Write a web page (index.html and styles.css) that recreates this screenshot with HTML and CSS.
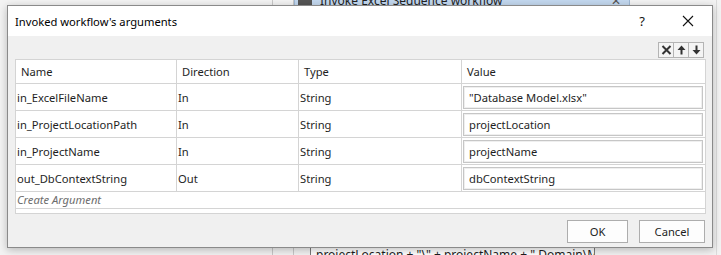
FILE: index.html
```html
<!DOCTYPE html>
<html lang="en">
<head>
    <meta charset="UTF-8">
    <title>Invoked workflow's arguments</title>
    <link rel="stylesheet" href="styles.css">
</head>
<body>
    <!-- designer canvas behind the modal -->
    <div class="backdrop">
        <div class="bg-line bg-line-a"></div>
        <div class="bg-line bg-line-b"></div>
        <div class="bg-activity">
            <span class="bg-icon"></span>
            <span class="bg-title">Invoke Excel Sequence workflow</span>
            <span class="bg-close">&#x2715;</span>
        </div>
        <div class="bg-expr">projectLocation + "\" + projectName + ".Domain\M</div>
        <div class="bg-edge"></div>
    </div>

    <div class="dialog">
        <div class="titlebar">
            <span class="title">Invoked workflow's arguments</span>
            <span class="help">?</span>
            <span class="close">
                <svg width="12" height="12" viewBox="0 0 12 12"><path d="M1 1 L11 11 M11 1 L1 11" stroke="#111" stroke-width="1.1" fill="none"/></svg>
            </span>
        </div>

        <div class="content">
            <div class="toolbar">
                <button class="tool">
                    <svg width="11" height="10" viewBox="0 0 11 10"><path d="M1.5 1 L9.5 9 M9.5 1 L1.5 9" stroke="#333" stroke-width="2" fill="none"/></svg>
                </button>
                <button class="tool">
                    <svg width="9" height="10" viewBox="0 0 9 10"><path d="M4.5 0.5 L8.5 5 L5.5 5 L5.5 9.5 L3.5 9.5 L3.5 5 L0.5 5 Z" fill="#333"/></svg>
                </button>
                <button class="tool">
                    <svg width="9" height="10" viewBox="0 0 9 10"><path d="M4.5 9.5 L8.5 5 L5.5 5 L5.5 0.5 L3.5 0.5 L3.5 5 L0.5 5 Z" fill="#333"/></svg>
                </button>
            </div>

            <div class="grid">
                <div class="row head">
                    <div class="cell">Name</div>
                    <div class="cell">Direction</div>
                    <div class="cell">Type</div>
                    <div class="cell">Value</div>
                </div>
                <div class="row">
                    <div class="cell">in_ExcelFileName</div>
                    <div class="cell">In</div>
                    <div class="cell">String</div>
                    <div class="cell value"><div class="input">"Database Model.xlsx"</div></div>
                </div>
                <div class="row">
                    <div class="cell">in_ProjectLocationPath</div>
                    <div class="cell">In</div>
                    <div class="cell">String</div>
                    <div class="cell value"><div class="input">projectLocation</div></div>
                </div>
                <div class="row">
                    <div class="cell">in_ProjectName</div>
                    <div class="cell">In</div>
                    <div class="cell">String</div>
                    <div class="cell value"><div class="input">projectName</div></div>
                </div>
                <div class="row">
                    <div class="cell">out_DbContextString</div>
                    <div class="cell">Out</div>
                    <div class="cell">String</div>
                    <div class="cell value"><div class="input">dbContextString</div></div>
                </div>
                <div class="create">Create Argument</div>
                <div class="grid-foot"></div>
            </div>

            <div class="footer">
                <button class="btn">OK</button>
                <button class="btn cancel">Cancel</button>
            </div>
        </div>
    </div>
</body>
</html>
```

FILE: styles.css
```css
/* Global Styles */
body {
    margin: 0;
    width: 721px;
    height: 255px;
    overflow: hidden;
    background-color: #f3f3f3;
    font-family: 'Noto Sans', 'Segoe UI', sans-serif;
    font-size: 11.2px;
    color: #1e1e1e;
    position: relative;
}

/* Canvas behind the dialog */
.backdrop {
    position: absolute;
    inset: 0;
}

.bg-line {
    position: absolute;
    top: 0;
    bottom: 0;
    width: 1px;
    background-color: #c8c8c8;
}

.bg-line-a { left: 272px; }
.bg-line-b { left: 293px; }

.bg-activity {
    position: absolute;
    left: 294px;
    top: -8px;
    width: 334px;
    height: 14px;
    background-color: #c3d8ef;
    border: 1px solid #9fb9d6;
    display: flex;
    align-items: flex-end;
    font-size: 12px;
    line-height: 13px;
    color: #222;
}

.bg-icon {
    width: 14px;
    height: 10px;
    margin-left: 3px;
    background-color: #555;
}

.bg-title {
    margin-left: 8px;
    flex: 1;
}

.bg-close {
    margin-right: 8px;
    color: #555;
}

.bg-expr {
    position: absolute;
    left: 310px;
    top: 247px;
    width: 278px;
    height: 14px;
    padding-left: 5px;
    background-color: #fff;
    border: 1px solid #7a7a7a;
    font-size: 12px;
    line-height: 14px;
    white-space: nowrap;
    overflow: hidden;
}

.bg-edge {
    position: absolute;
    left: 716px;
    top: 0;
    bottom: 0;
    width: 1px;
    background-color: #dcdcdc;
}

/* Dialog window */
.dialog {
    position: absolute;
    left: 7px;
    top: 5px;
    width: 704px;
    height: 241px;
    border: 1px solid #8a8a8a;
    background-color: #f0f0f0;
    box-shadow: 0 2px 8px rgba(0, 0, 0, 0.25);
    display: flex;
    flex-direction: column;
}

.titlebar {
    height: 30px;
    background-color: #ffffff;
    display: flex;
    align-items: center;
    padding-left: 7px;
}

.title {
    flex: 1;
    color: #000;
    padding-top: 1px;
}

.help {
    font-size: 13px;
    color: #111;
    margin-right: 37px;
}

.close {
    display: flex;
    margin-right: 18px;
}

.content {
    flex: 1;
    padding: 6px 6px 0 7px;
    display: flex;
    flex-direction: column;
}

.toolbar {
    display: flex;
    justify-content: flex-end;
    margin-right: 2px;
}

.tool {
    width: 16px;
    height: 16px;
    padding: 0;
    margin: 0 0 0 -1px;
    border: 1px solid #b4b4b4;
    background-color: #f4f4f4;
    display: flex;
    align-items: center;
    justify-content: center;
}

/* Arguments grid */
.grid {
    margin-top: 1px;
    background-color: #ffffff;
    border: 1px solid #d4d4d4;
}

.row {
    display: grid;
    grid-template-columns: 161px 122px 163px 1fr;
    height: 27px;
    border-bottom: 1px solid #d4d4d4;
    box-sizing: border-box;
}

.row.head {
    height: 24px;
}

.cell {
    display: flex;
    align-items: center;
    padding-left: 1px;
    border-right: 1px solid #d4d4d4;
    white-space: nowrap;
    overflow: hidden;
}

.cell:last-child {
    border-right: none;
    margin-right: 2px;
}

.head .cell {
    padding-left: 5px;
}

.value {
    padding: 2px 0 1px 1px;
}

.input {
    flex: 1;
    align-self: stretch;
    display: flex;
    align-items: center;
    padding-left: 5px;
    border: 1px solid #c6c6c6;
    box-shadow: inset 0 0 0 1px #efefef;
}

.create {
    height: 16px;
    line-height: 16px;
    padding-left: 1px;
    font-style: italic;
    color: #6d6d6d;
    border-bottom: 1px solid #d4d4d4;
}

.grid-foot {
    height: 4px;
}

/* Footer buttons */
.footer {
    display: flex;
    justify-content: flex-end;
    gap: 11px;
    margin-top: 6px;
    margin-right: 1px;
}

.btn {
    width: 61px;
    height: 23px;
    padding: 0;
    border: 1px solid #adadad;
    background-color: #fdfdfd;
    font-family: 'Noto Sans', 'Segoe UI', sans-serif;
    font-size: 11.2px;
    color: #1e1e1e;
}

.btn.cancel {
    width: 66px;
}
```
